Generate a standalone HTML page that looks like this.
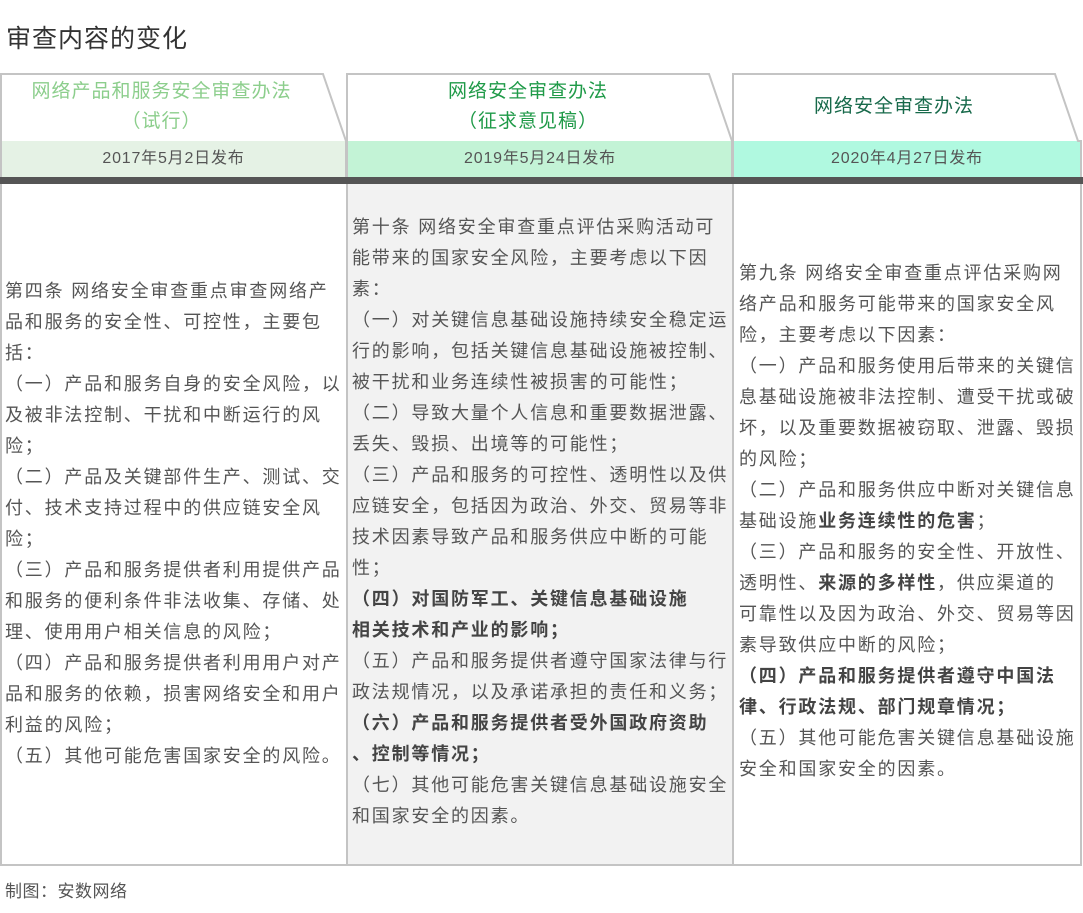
<!DOCTYPE html>
<html><head><meta charset="utf-8"><style>
body{margin:0;width:1083px;height:913px;background:#fff;position:relative;overflow:hidden;font-family:"Liberation Sans","Noto Sans CJK SC",sans-serif;color:#555;}
.a{position:absolute;white-space:nowrap;}
.t{font-size:18px;letter-spacing:1.8px;line-height:31px;color:#555;}
.h{font-size:19px;letter-spacing:1px;text-align:center;line-height:30px;}
.d{font-size:16px;letter-spacing:0.8px;text-align:center;line-height:36px;color:#555;}
b{color:#444;}
</style></head><body>
<div class="a" style="left:6px;top:19px;font-size:25px;letter-spacing:1px;color:#333;">审查内容的变化</div>
<svg class="a" style="left:0;top:0" width="1083" height="913">
<rect x="0" y="184" width="347" height="681" fill="#fff"/>
<rect x="347" y="184" width="386" height="681" fill="#f2f2f2"/>
<rect x="1" y="141" width="346" height="36" fill="#e5f2e5"/>
<rect x="347" y="141" width="386" height="36" fill="#c3f3d6"/>
<rect x="733" y="141" width="348" height="36" fill="#b0f9e0"/>
<g fill="none" stroke="#c4c4c4" stroke-width="2">
<path d="M1 184 V74 H323 L346 141 V184"/>
<path d="M347 184 V74 H709 L732 141 V184"/>
<path d="M733 184 V74 H1055 L1078 141 H1081 V184"/>
<path d="M1 184 V865 H1081 V184 M347 184 V865 M733 184 V865"/>
</g>
<rect x="0" y="177" width="1083" height="7" fill="#555"/>
</svg>
<div class="a h" style="left:0;width:323px;top:77px;color:#8cce8c;">网络产品和服务安全审查办法<br>（试行）</div>
<div class="a h" style="left:347px;width:362px;top:77px;color:#1f9a48;">网络安全审查办法<br>（征求意见稿）</div>
<div class="a h" style="left:733px;width:322px;top:92px;color:#17694a;">网络安全审查办法</div>
<div class="a d" style="left:0;width:347px;top:141px;">2017年5月2日发布</div>
<div class="a d" style="left:347px;width:386px;top:141px;">2019年5月24日发布</div>
<div class="a d" style="left:733px;width:348px;top:141px;">2020年4月27日发布</div>
<div class="a t" style="left:5px;top:276px;">第四条 网络安全审查重点审查网络产<br>品和服务的安全性、可控性，主要包<br>括：<br>（一）产品和服务自身的安全风险，以<br>及被非法控制、干扰和中断运行的风<br>险；<br>（二）产品及关键部件生产、测试、交<br>付、技术支持过程中的供应链安全风<br>险；<br>（三）产品和服务提供者利用提供产品<br>和服务的便利条件非法收集、存储、处<br>理、使用用户相关信息的风险；<br>（四）产品和服务提供者利用用户对产<br>品和服务的依赖，损害网络安全和用户<br>利益的风险；<br>（五）其他可能危害国家安全的风险。</div>
<div class="a t" style="left:352px;top:212px;">第十条 网络安全审查重点评估采购活动可<br>能带来的国家安全风险，主要考虑以下因<br>素：<br>（一）对关键信息基础设施持续安全稳定运<br>行的影响，包括关键信息基础设施被控制、<br>被干扰和业务连续性被损害的可能性；<br>（二）导致大量个人信息和重要数据泄露、<br>丢失、毁损、出境等的可能性；<br>（三）产品和服务的可控性、透明性以及供<br>应链安全，包括因为政治、外交、贸易等非<br>技术因素导致产品和服务供应中断的可能<br>性；<br><b>（四）对国防军工、关键信息基础设施<br>相关技术和产业的影响；</b><br>（五）产品和服务提供者遵守国家法律与行<br>政法规情况，以及承诺承担的责任和义务；<br><b>（六）产品和服务提供者受外国政府资助<br>、控制等情况；</b><br>（七）其他可能危害关键信息基础设施安全<br>和国家安全的因素。</div>
<div class="a t" style="left:739px;top:258px;">第九条 网络安全审查重点评估采购网<br>络产品和服务可能带来的国家安全风<br>险，主要考虑以下因素：<br>（一）产品和服务使用后带来的关键信<br>息基础设施被非法控制、遭受干扰或破<br>坏，以及重要数据被窃取、泄露、毁损<br>的风险；<br>（二）产品和服务供应中断对关键信息<br>基础设施<b>业务连续性的危害</b>；<br>（三）产品和服务的安全性、开放性、<br>透明性、<b>来源的多样性</b>，供应渠道的<br>可靠性以及因为政治、外交、贸易等因<br>素导致供应中断的风险；<br><b>（四）产品和服务提供者遵守中国法<br>律、行政法规、部门规章情况；</b><br>（五）其他可能危害关键信息基础设施<br>安全和国家安全的因素。</div>
<div class="a" style="left:5px;top:877px;font-size:17px;letter-spacing:0.5px;color:#555;">制图：安数网络</div>
</body></html>
